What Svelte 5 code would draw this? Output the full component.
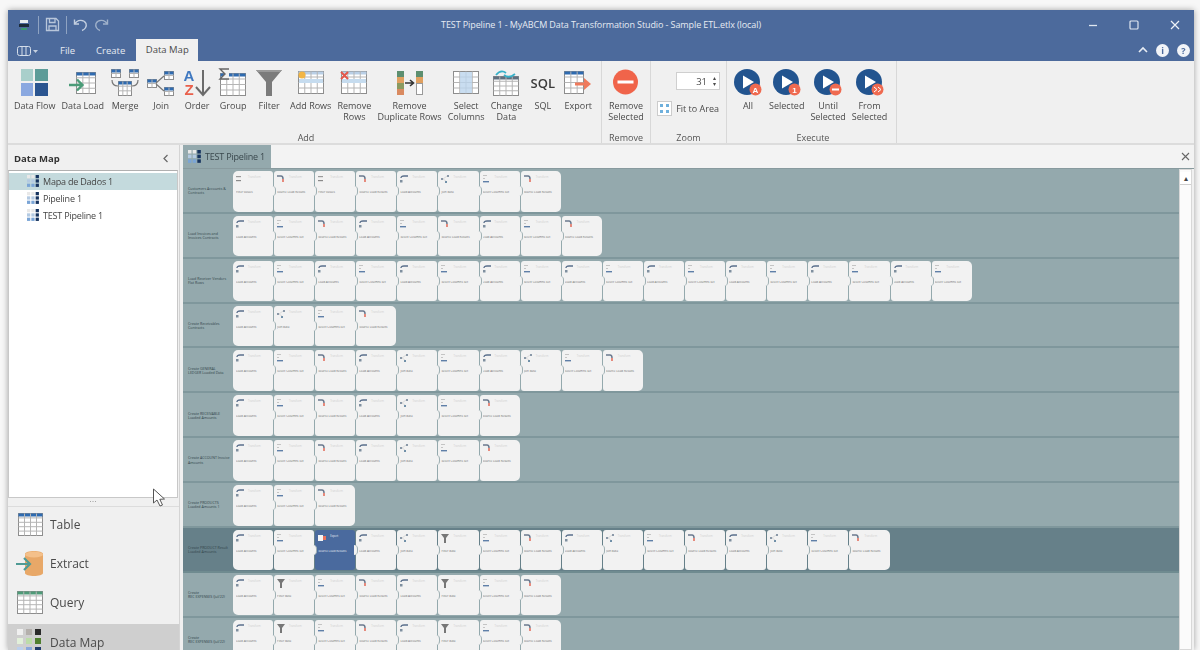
<script>
  const caption = {
    x: 'Filter values',
    p: 'Source Load Results',
    l: 'Load Accounts',
    m: 'Select Columns Set',
    j: 'Join data',
    f: 'Filter data',
    s: 'Source Load Results',
  }

  const rows = [
    { label: ['Customers Accounts &', 'Contracts'], cards: 'xpxpljmp' },
    { label: ['Load Invoices and', 'Invoices Contracts'], cards: 'lmplmplmp' },
    { label: ['Load Receiver Vendors', 'Flat Rows'], cards: 'lmlmlmlmlmlmlmlmlm' },
    { label: ['Create Receivables', 'Contracts'], cards: 'ljmp' },
    { label: ['Create GENERAL', 'LEDGER Loaded Data'], cards: 'lmpljmljmp' },
    { label: ['Create RECEIVABLE', 'Loaded Amounts'], cards: 'lmpljmp' },
    { label: ['Create ACCOUNT Invoice', 'Amounts'], cards: 'lmpljmp' },
    { label: ['Create PRODUCTS', 'Loaded Amounts 1'], cards: 'lmp' },
    { label: ['Create PRODUCT Result', 'Loaded Amounts'], cards: 'lmsljfmpljmpljmp', active: true },
    { label: ['Create', 'REC EXPENSES (Jul/22)'], cards: 'lfmplfmp' },
    { label: ['Create', 'REC EXPENSES (Jul/22)'], cards: 'lfmplfmp' },
  ]

  const treeItems = ['Mapa de Dados 1', 'Pipeline  1', 'TEST Pipeline 1']
  const nums = [0, 1, 2, 3]
</script>

{#snippet grid(x, y, w, h, cols, lines, head)}
  <rect x={x} y={y} width={w} height={h} fill="#fff" stroke="#8d8d8d" />
  {#if head}<rect x={x} y={y} width={w} height="3" fill={head} />{/if}
  {#each Array(cols - 1) as _, i}
    <line x1={x + (w * (i + 1)) / cols} x2={x + (w * (i + 1)) / cols} y1={y} y2={y + h} stroke="#b5b5b5" />
  {/each}
  {#each Array(lines - 1) as _, i}
    <line x1={x} x2={x + w} y1={y + (h * (i + 1)) / lines} y2={y + (h * (i + 1)) / lines} stroke="#b5b5b5" />
  {/each}
{/snippet}

{#snippet mapIcon(size)}
  <svg width={size} height={size} viewBox="0 0 12 12">
    {#each nums.slice(0, 3) as r}
      {#each nums.slice(0, 3) as c}
        <rect x={c * 4} y={r * 4} width="3" height="3"
          fill={c === 2 ? '#16335f' : r === 0 ? '#e8e8e8' : r === 1 ? '#b4cae2' : '#7ba5d6'} />
      {/each}
    {/each}
  </svg>
{/snippet}

{#snippet playIcon(badge)}
  <svg width="30" height="30" viewBox="0 0 30 30">
    <circle cx="14" cy="14" r="13" fill="#22548f" />
    <path d="M10 7.5 L21 14 L10 20.5 Z" fill="#fff" />
    <circle cx="22.5" cy="21.5" r="6" fill="#ef6a50" />
    {#if badge === 'A'}
      <text x="22.5" y="24.5" class="badge">A</text>
    {:else if badge === '1'}
      <text x="22.5" y="24.5" class="badge">1</text>
    {:else if badge === 'u'}
      <rect x="19" y="20.5" width="7" height="2" fill="#fff" />
    {:else}
      <path d="M19 19 l3 2.5 l-3 2.5 M23 19 l3 2.5 l-3 2.5" fill="none" stroke="#fff" />
    {/if}
  </svg>
{/snippet}

{#snippet cardIcon(kind)}
  <svg class="cicon" width="9" height="9" viewBox="0 0 9 9">
    {#if kind === 'l' || kind === 's'}
      <path d="M1 3 Q1 1 4 1 H8" fill="none" stroke="#5a6f8c" stroke-width="1.4" />
      <rect x="0" y="5" width="2.5" height="2.5" fill="#7f8f9f" />
    {:else if kind === 'p'}
      <path d="M0 1 H4 Q6 1 6 4" fill="none" stroke="#6b7a8f" stroke-width="1.5" />
      <path d="M6 4 V7" stroke="#e2705f" stroke-width="1.6" />
    {:else if kind === 'm'}
      <rect x="0" y="0" width="4" height="1" fill="#c4c4c4" />
      <rect x="0" y="3" width="2" height="1" fill="#c4c4c4" />
      <rect x="0" y="6" width="6" height="1.4" fill="#5f7fa8" />
    {:else if kind === 'x'}
      <rect x="0" y="1" width="5" height="1.2" fill="#9a9a9a" />
      <rect x="0" y="5" width="5" height="1.2" fill="#8a8a8a" />
    {:else if kind === 'j'}
      <rect x="0" y="3" width="2" height="2" fill="#8a98a8" />
      <rect x="6" y="0" width="2" height="2" fill="#8a98a8" />
      <rect x="4" y="6" width="2" height="2" fill="#6f8fa8" />
      <path d="M2 4 L6 1 M2 4 L5 6" stroke="#c0c0c0" stroke-width=".5" />
    {:else}
      <path d="M0 0 H8 L5 4 V9 H3 V4 Z" fill="#777" />
    {/if}
  </svg>
{/snippet}

<div class="window">
  <header class="titlebar">
    <div class="title-row">
      <div class="quick">
        <svg width="12" height="12" viewBox="0 0 12 12">
          <rect x="2" y="1" width="8" height="3" fill="#e8eef0" />
          <rect x="1" y="5" width="10" height="3" fill="#1c2c3a" />
          <rect x="3" y="9" width="6" height="2" fill="#3a9a70" />
        </svg>
        <i class="qsep first"></i>
        <svg width="15" height="15" viewBox="0 0 15 15" fill="none" stroke="#b8c6da" stroke-width="1.3">
          <path d="M1.5 1.5 H11 L13.5 4 V13.5 H1.5 Z" />
          <path d="M4.5 1.5 V5.5 H10 V1.5 M4 13.5 V9 H11 V13.5" />
        </svg>
        <i class="qsep"></i>
        <svg width="15" height="14" viewBox="0 0 15 14" fill="none" stroke="#c3cfe0" stroke-width="1.4">
          <path d="M1.5 1.5 V6 H6" />
          <path d="M1.8 6 C4 1.5 11 1 13 5.5 C14 8.5 12 11.5 9 12.5" />
        </svg>
        <svg class="redo" width="15" height="14" viewBox="0 0 15 14" fill="none" stroke="#9fb1ca" stroke-width="1.4">
          <path d="M13.5 1.5 V6 H9" />
          <path d="M13.2 6 C11 1.5 4 1 2 5.5 C1 8.5 3 11.5 6 12.5" />
        </svg>
      </div>
      <div class="title">TEST Pipeline 1 - MyABCM Data Transformation Studio - Sample ETL.etlx (local)</div>
      <div class="winbtns">
        <svg width="10" height="10" viewBox="0 0 10 10"><path d="M1 5.5 H9" stroke="#dfe6f0" stroke-width="1.3" /></svg>
        <svg width="10" height="10" viewBox="0 0 10 10"><rect x="1" y="1" width="8" height="8" rx="1" fill="none" stroke="#dfe6f0" stroke-width="1.2" /></svg>
        <svg width="10" height="10" viewBox="0 0 10 10"><path d="M1 1 L9 9 M9 1 L1 9" stroke="#eef2f7" stroke-width="1.2" /></svg>
      </div>
    </div>
    <div class="tab-row">
      <svg class="panel" width="22" height="12" viewBox="0 0 22 12" fill="none" stroke="#d5deea">
        <rect x=".5" y="1.5" width="13" height="9" rx="2" />
        <path d="M5 2 V10 M9 2 V10" />
        <path d="M16 5 L18.5 8 L21 5 Z" fill="#c5d0e0" stroke="none" />
      </svg>
      <span class="menu file">File</span>
      <span class="menu create">Create</span>
      <span class="menu current">Data Map</span>
      <div class="helpers">
        <svg width="10" height="8" viewBox="0 0 10 8"><path d="M1 6 L5 2 L9 6" fill="none" stroke="#e8edf4" stroke-width="1.6" /></svg>
        <span class="round">i</span>
        <span class="round">?</span>
      </div>
    </div>
  </header>

  <section class="ribbon">
    <div class="group add">
      <div class="buttons">
        <div class="rbtn">
          <svg width="30" height="30" viewBox="0 0 30 30">
            <rect x="1" y="1" width="12" height="12" fill="#a9cfcb" /><rect x="15" y="1" width="13" height="12" fill="#5d9c98" />
            <rect x="1" y="15" width="12" height="13" fill="#8aa8e0" /><rect x="15" y="15" width="13" height="13" fill="#2b5590" />
          </svg>
          <span>Data Flow</span>
        </div>
        <div class="rbtn">
          <svg width="30" height="30" viewBox="0 0 30 30">
            {@render grid(8.5, 4.5, 19, 21, 3, 4, '#2f6bb0')}
            <path d="M1 17 H14 M9 11.5 L14.5 17 L9 22.5" fill="none" stroke="#4a9c78" stroke-width="2.4" />
          </svg>
          <span>Data Load</span>
        </div>
        <div class="rbtn">
          <svg width="30" height="30" viewBox="0 0 30 30">
            {@render grid(1.5, 1.5, 9, 8, 2, 2, '#2f6bb0')}
            {@render grid(19.5, 1.5, 9, 8, 2, 2, '#2f6bb0')}
            {@render grid(8.5, 13.5, 13, 14, 3, 3, '#2f6bb0')}
            <path d="M2 12 Q2 18 8 18 M28 12 Q28 18 22 18" fill="none" stroke="#777" stroke-width="1.2" />
          </svg>
          <span>Merge</span>
        </div>
        <div class="rbtn">
          <svg width="30" height="30" viewBox="0 0 30 30">
            {@render grid(1.5, 11.5, 9, 8, 2, 2, '#2f6bb0')}
            {@render grid(18.5, 3.5, 9, 8, 2, 2, '#2f6bb0')}
            {@render grid(18.5, 19.5, 9, 8, 2, 2, '#2f6bb0')}
            <path d="M10 15 L18 8 M10 16 L18 23" stroke="#777" stroke-width="1.2" />
          </svg>
          <span>Join</span>
        </div>
        <div class="rbtn">
          <svg width="30" height="30" viewBox="0 0 30 30">
            <text x="7" y="13" class="az blue">A</text>
            <text x="7" y="27" class="az red">Z</text>
            <path d="M21 2 V26 M14 19 L21 27 L28 19" fill="none" stroke="#6b6b6b" stroke-width="2" />
          </svg>
          <span>Order</span>
        </div>
        <div class="rbtn">
          <svg width="30" height="30" viewBox="0 0 30 30">
            {@render grid(2.5, 5.5, 25, 22, 4, 4, '#2f6bb0')}
            <path d="M11 1 H2 L7 6 L2 11 H11" fill="#f0f0f0" stroke="#666" stroke-width="1.4" />
          </svg>
          <span>Group</span>
        </div>
        <div class="rbtn">
          <svg width="30" height="30" viewBox="0 0 30 30">
            <path d="M2 2 H28 L18 14 V28 H12 V14 Z" fill="#7b7b7b" />
            <path d="M2 2 H28 L26 4 H4 Z" fill="#999" />
          </svg>
          <span>Filter</span>
        </div>
        <div class="rbtn">
          <svg width="30" height="30" viewBox="0 0 30 30">
            {@render grid(2.5, 3.5, 25, 22, 4, 4, '#b9cfe6')}
            <rect x="3" y="11" width="24" height="4" fill="#c6dcef" />
            <circle cx="6" cy="7" r="3.5" fill="#f2b544" />
          </svg>
          <span>Add Rows</span>
        </div>
        <div class="rbtn">
          <svg width="30" height="30" viewBox="0 0 30 30">
            {@render grid(2.5, 3.5, 25, 22, 4, 4, '#b9cfe6')}
            <rect x="3" y="11" width="24" height="4" fill="#c6dcef" />
            <path d="M2 4 L9 11 M9 4 L2 11" stroke="#e4574a" stroke-width="2" />
          </svg>
          <span class="wrap">Remove Rows</span>
        </div>
        <div class="rbtn">
          <svg width="30" height="30" viewBox="0 0 30 30">
            <rect x="2" y="3" width="7" height="6" fill="#5d8f70" /><rect x="2" y="9" width="7" height="6" fill="#e0a060" />
            <rect x="2" y="15" width="7" height="6" fill="#8a9a60" /><rect x="2" y="21" width="7" height="6" fill="#d98a60" />
            <rect x="21" y="3" width="7" height="6" fill="#5d8f70" /><rect x="21" y="9" width="7" height="6" fill="#e0a060" />
            <rect x="21.5" y="15.5" width="6" height="11" fill="#fff" stroke="#999" />
            <path d="M10 15 H18 M15 12 L18.5 15 L15 18" fill="none" stroke="#333" stroke-width="1.6" />
          </svg>
          <span>Remove<br />Duplicate Rows</span>
        </div>
        <div class="rbtn">
          <svg width="30" height="30" viewBox="0 0 30 30">
            {@render grid(2.5, 3.5, 25, 22, 4, 4, '')}
            <rect x="9" y="4" width="12" height="21" fill="#bcd4ec" opacity=".8" />
          </svg>
          <span>Select<br />Columns</span>
        </div>
        <div class="rbtn tight">
          <svg width="30" height="30" viewBox="0 0 30 30">
            {@render grid(2.5, 8.5, 25, 19, 4, 4, '#5f6f7f')}
            <path d="M5 7 Q10 1 15 5 M24 6 Q18 11 13 7" fill="none" stroke="#37b0c8" stroke-width="1.8" />
          </svg>
          <span>Change<br />Data</span>
        </div>
        <div class="rbtn tight">
          <div class="sqlmark">SQL</div>
          <span>SQL</span>
        </div>
        <div class="rbtn tight">
          <svg width="30" height="30" viewBox="0 0 30 30">
            {@render grid(1.5, 3.5, 19, 22, 3, 4, '#2f6bb0')}
            <path d="M12 16 H24" stroke="#ef7a5c" stroke-width="3" />
            <path d="M21 10 L28 16 L21 22 Z" fill="#ef7a5c" />
          </svg>
          <span>Export</span>
        </div>
      </div>
      <div class="glabel">Add</div>
    </div>

    <div class="group remove">
      <div class="buttons">
        <div class="rbtn">
          <svg width="30" height="30" viewBox="0 0 30 30">
            <circle cx="14.5" cy="14" r="12.5" fill="#f0644a" />
            <rect x="6.5" y="12.5" width="16" height="3" fill="#fff" />
          </svg>
          <span>Remove<br />Selected</span>
        </div>
      </div>
      <div class="glabel">Remove</div>
    </div>

    <div class="group zoom">
      <div class="zoom-body">
        <div class="spin">
          <span>31</span>
          <div class="arrows"><b>▴</b><b>▾</b></div>
        </div>
        <div class="fit">
          <svg width="15" height="15" viewBox="0 0 15 15">
            <rect x=".5" y=".5" width="14" height="14" fill="#fff" stroke="#ccc" />
            <rect x="3" y="3" width="3" height="3" fill="#6fb0dc" /><rect x="9" y="3" width="3" height="3" fill="#6fb0dc" />
            <rect x="3" y="9" width="3" height="3" fill="#6fb0dc" /><rect x="9" y="9" width="3" height="3" fill="#6fb0dc" />
          </svg>
          <span>Fit to Area</span>
        </div>
      </div>
      <div class="glabel">Zoom</div>
    </div>

    <div class="group execute">
      <div class="buttons">
        <div class="rbtn">{@render playIcon('A')}<span>All</span></div>
        <div class="rbtn">{@render playIcon('1')}<span>Selected</span></div>
        <div class="rbtn">{@render playIcon('u')}<span>Until<br />Selected</span></div>
        <div class="rbtn">{@render playIcon('f')}<span>From<br />Selected</span></div>
      </div>
      <div class="glabel">Execute</div>
    </div>
  </section>

  <div class="main">
    <aside class="side">
      <div class="side-head">
        <strong>Data Map</strong>
        <svg width="7" height="9" viewBox="0 0 7 9"><path d="M5.5 1 L2 4.5 L5.5 8" fill="none" stroke="#666" stroke-width="1.2" /></svg>
      </div>
      <div class="tree">
        {#each treeItems as item, i}
          <div class="tree-item" class:sel={i === 0}>
            {@render mapIcon(13)}
            <span>{item}</span>
          </div>
        {/each}
      </div>
      <div class="split">•••</div>
      <nav class="nav">
        <div class="nav-item">
          <svg width="28" height="26" viewBox="0 0 28 26">
            {@render grid(2.5, 1.5, 24, 22, 4, 5, '#2f6bb0')}
          </svg>
          <span>Table</span>
        </div>
        <div class="nav-item">
          <svg width="28" height="28" viewBox="0 0 28 28">
            <path d="M9 4 C9 0 27 0 27 4 V23 C27 27 9 27 9 23 Z" fill="#e8a868" />
            <ellipse cx="18" cy="4.5" rx="9" ry="3" fill="#f4c08a" />
            <path d="M0 14 H13 M8 8 L14 14 L8 20" fill="none" stroke="#4f9a94" stroke-width="2.2" />
          </svg>
          <span>Extract</span>
        </div>
        <div class="nav-item">
          <svg width="28" height="26" viewBox="0 0 28 26">
            {@render grid(1.5, 1.5, 25, 22, 4, 5, '#4f9a78')}
          </svg>
          <span>Query</span>
        </div>
        <div class="nav-item on">
          <svg width="28" height="26" viewBox="0 0 28 26">
            <rect x="1" y="0" width="6" height="6" fill="#f0f0f0" /><rect x="10" y="0" width="6" height="6" fill="#b4b0ac" /><rect x="19" y="0" width="6" height="6" fill="#2a2a2a" />
            <rect x="1" y="9" width="6" height="6" fill="#e2f0da" /><rect x="10" y="9" width="6" height="6" fill="#bcdca8" /><rect x="19" y="9" width="6" height="6" fill="#4f7f2f" />
            <rect x="1" y="18" width="6" height="6" fill="#bcd0ec" /><rect x="10" y="18" width="6" height="6" fill="#8aa8dc" /><rect x="19" y="18" width="6" height="6" fill="#1f3a6a" />
          </svg>
          <span>Data Map</span>
        </div>
      </nav>
    </aside>

    <div class="content">
      <div class="doc-tabs">
        <div class="doc-tab">
          {@render mapIcon(14)}
          <span>TEST Pipeline 1</span>
        </div>
        <svg width="9" height="9" viewBox="0 0 9 9"><path d="M1 1 L8 8 M8 1 L1 8" stroke="#666" stroke-width="1.1" /></svg>
      </div>
      <div class="canvas">
        <div class="lanes">
          {#each rows as row}
            <div class="lane" class:active={row.active}>
              <div class="lane-label">{row.label[0]}<br />{row.label[1]}</div>
              <div class="cards">
                {#each row.cards.split('') as kind}
                  <div class="card" class:picked={kind === 's'}>
                    <div class="chead">
                      {#if kind === 's'}
                        <svg class="cicon" width="9" height="9" viewBox="0 0 9 9">
                          <rect x="0" y="1" width="5" height="6" fill="#f4f4f4" /><rect x="5" y="2" width="3" height="4" fill="#e8705c" />
                        </svg>
                      {:else}
                        {@render cardIcon(kind)}
                      {/if}
                      <small>{kind === 's' ? 'Export' : 'Transform'}</small>
                    </div>
                    <p>{caption[kind]}</p>
                  </div>
                {/each}
              </div>
            </div>
          {/each}
        </div>
        <div class="scroll">
          <div class="scroll-up">▴</div>
        </div>
      </div>
    </div>
  </div>

  <svg class="cursor" width="14" height="19" viewBox="0 0 14 19">
    <path d="M1.5 1 V15 L5 12 L8 18 L10.5 17 L7.8 11.3 L12.5 11 Z" fill="#fff" stroke="#555" />
  </svg>
</div>

<style>
  :global(body) {
    margin: 0;
    background: #f7f7f7;
    overflow: hidden;
  }
  .window {
    position: relative;
    margin: 10px 6px 0 8px;
    height: 640px;
    overflow: hidden;
    background: #f0f0f0;
    box-shadow: 0 0 6px rgba(0, 0, 0, 0.35);
    font-family: "Open Sans", "Liberation Sans", sans-serif;
    color: #4a4a4a;
    filter: blur(0.6px);
  }
  .titlebar {
    height: 51px;
    background: #4c6a9c;
    color: #e6ebf3;
    font-size: 9.5px;
  }
  .title-row {
    display: grid;
    grid-template-columns: 1fr auto 1fr;
    align-items: center;
    height: 29px;
  }
  .quick {
    display: flex;
    align-items: center;
    padding-left: 10px;
  }
  .qsep {
    width: 1px;
    height: 18px;
    margin: 0 6px;
    background: #8fa3c2;
  }
  .qsep.first {
    margin-left: 8px;
  }
  .redo {
    margin-left: 6px;
  }
  .title {
    font-size: 9px;
    letter-spacing: -0.1px;
  }
  .winbtns {
    display: flex;
    justify-content: flex-end;
    gap: 31px;
    padding-right: 14px;
  }
  .tab-row {
    display: flex;
    align-items: flex-end;
    height: 22px;
    padding-left: 9px;
  }
  .panel {
    margin-bottom: 4px;
  }
  .menu {
    line-height: 20px;
  }
  .file {
    margin-left: 21px;
  }
  .create {
    margin-left: 21px;
  }
  .current {
    margin-left: 11px;
    width: 62px;
    height: 22px;
    line-height: 22px;
    text-align: center;
    background: #f0f0f0;
    color: #4a4a4a;
  }
  .helpers {
    margin-left: auto;
    display: flex;
    align-items: center;
    gap: 7px;
    height: 22px;
    padding-right: 4px;
    margin-top: -2px;
  }
  .round {
    width: 13px;
    height: 13px;
    margin-left: 1px;
    border-radius: 50%;
    background: #f2f4f8;
    color: #4c6a9c;
    font-size: 9px;
    font-weight: 700;
    line-height: 13px;
    text-align: center;
  }
  .ribbon {
    display: flex;
    height: 84px;
    border-bottom: 2px solid #dcdcdc;
    box-sizing: border-box;
  }
  .group {
    display: flex;
    flex-direction: column;
    border-right: 1px solid #d8d8d8;
    box-sizing: border-box;
  }
  .add {
    width: 594px;
    padding-left: 3px;
  }
  .remove {
    width: 49px;
  }
  .zoom {
    width: 76px;
  }
  .execute {
    width: 170px;
    padding-left: 3px;
  }
  .buttons {
    display: flex;
    flex: 1;
  }
  .remove .buttons {
    justify-content: center;
  }
  .rbtn {
    display: flex;
    flex-direction: column;
    align-items: center;
    box-sizing: border-box;
    min-width: 36px;
    padding: 7px 3px 0;
    font-size: 9px;
    line-height: 11px;
    text-align: center;
    white-space: nowrap;
  }
  .rbtn.tight {
    min-width: 35px;
  }
  .rbtn span {
    margin-top: 2px;
  }
  .rbtn .wrap {
    width: 34px;
    white-space: normal;
  }
  .sqlmark {
    height: 30px;
    line-height: 30px;
    font-size: 13px;
    font-weight: 600;
    color: #3b3b3b;
  }
  .az {
    font-family: "Liberation Sans", sans-serif;
    font-size: 15px;
    font-weight: 700;
    text-anchor: middle;
  }
  .blue {
    fill: #3f78c0;
  }
  .red {
    fill: #e9604c;
  }
  .badge {
    font-family: "Liberation Sans", sans-serif;
    font-size: 8px;
    font-weight: 700;
    fill: #fff;
    text-anchor: middle;
  }
  .glabel {
    height: 12px;
    line-height: 13px;
    font-size: 9px;
    text-align: center;
    color: #555;
  }
  .zoom-body {
    flex: 1;
    display: flex;
    flex-direction: column;
    align-items: flex-end;
    padding: 11px 6px 0 0;
    font-size: 9px;
  }
  .spin {
    display: flex;
    justify-content: flex-end;
    align-items: center;
    gap: 6px;
    width: 44px;
    height: 18px;
    box-sizing: border-box;
    padding-right: 3px;
    background: #fff;
    border: 1px solid #cfcfcf;
    font-size: 9.5px;
  }
  .arrows {
    display: flex;
    flex-direction: column;
    font-size: 6px;
    line-height: 6px;
  }
  .arrows b {
    font-weight: 400;
  }
  .fit {
    display: flex;
    align-items: center;
    gap: 4px;
    margin-top: 11px;
    margin-right: 1px;
    white-space: nowrap;
  }
  .main {
    display: flex;
    height: 505px;
  }
  .side {
    width: 172px;
    display: flex;
    flex-direction: column;
    flex: none;
    border-right: 1px solid #d4d4d4;
    box-sizing: border-box;
  }
  .side-head {
    display: flex;
    align-items: center;
    justify-content: space-between;
    height: 25px;
    flex: none;
    padding: 2px 10px 0 6px;
    box-sizing: border-box;
    font-size: 9.5px;
  }
  .side-head strong {
    color: #333;
    font-weight: 700;
  }
  .tree {
    height: 328px;
    flex: none;
    margin-right: 1px;
    padding-top: 2px;
    box-sizing: border-box;
    background: #fff;
    border: 1px solid #c8c8c8;
    border-top-color: #b0b0b0;
  }
  .tree-item {
    display: flex;
    align-items: center;
    gap: 3px;
    height: 17px;
    padding-left: 18px;
    font-size: 9px;
    color: #444;
    letter-spacing: -0.2px;
  }
  .tree-item.sel {
    background: #c4dadd;
  }
  .split {
    height: 8px;
    line-height: 7px;
    font-size: 4px;
    letter-spacing: 1px;
    text-align: center;
    color: #888;
    border-bottom: 1px solid #dcdcdc;
    flex: none;
  }
  .nav {
    flex: 1;
    display: flex;
    flex-direction: column;
  }
  .nav-item {
    display: flex;
    align-items: center;
    gap: 6px;
    height: 39px;
    flex: none;
    box-sizing: border-box;
    padding: 0 0 4px 8px;
    font-size: 12px;
    color: #4a4a4a;
  }
  .nav-item svg {
    flex: none;
  }
  .nav-item.on {
    background: #cfcfcf;
    height: 45px;
    padding-bottom: 9px;
  }
  .content {
    flex: 1;
    min-width: 0;
    margin-left: 3px;
    display: flex;
    flex-direction: column;
  }
  .doc-tabs {
    display: flex;
    align-items: center;
    justify-content: space-between;
    height: 23px;
    flex: none;
    padding-right: 4px;
    background: #f3f3f3;
  }
  .doc-tab {
    display: flex;
    align-items: center;
    gap: 3px;
    align-self: stretch;
    width: 88px;
    padding-left: 5px;
    box-sizing: border-box;
    background: #94a9ad;
    color: #39474c;
    font-size: 9px;
    letter-spacing: -0.2px;
    white-space: nowrap;
  }
  .canvas {
    flex: 1;
    min-height: 0;
    display: flex;
    padding-right: 2px;
    border-top: 1px solid #889a9e;
  }
  .lanes {
    flex: 1;
    min-width: 0;
    background: #94a9ad;
  }
  .lane {
    display: flex;
    height: 44.87px;
    box-sizing: border-box;
    padding-top: 2px;
    border-bottom: 2px solid #7f979c;
  }
  .lane.active {
    background: #668089;
    border-bottom-color: #6f8b90;
  }
  .lane-label {
    width: 50px;
    flex: none;
    align-self: center;
    padding-left: 5px;
    box-sizing: border-box;
    font-size: 3.6px;
    line-height: 4.2px;
    color: #33454c;
  }
  .cards {
    display: flex;
    gap: 1px;
  }
  .card {
    position: relative;
    width: 40.1px;
    height: 40.6px;
    box-sizing: border-box;
    padding: 4px 3px;
    background: #f2f2f2;
    border-radius: 3px;
  }
  .card:first-child {
    border-radius: 5px 3px 3px 5px;
  }
  .card:last-child {
    border-radius: 3px 5px 5px 3px;
  }
  .card:not(:last-child)::after {
    content: "";
    position: absolute;
    top: 15px;
    right: -3px;
    width: 4px;
    height: 10px;
    box-sizing: border-box;
    background: #f2f2f2;
    border-right: 1px solid #9fb0b3;
    border-radius: 0 5px 5px 0;
    z-index: 1;
  }
  .card.picked {
    background: #4a6a9e;
    color: #e8edf5;
  }
  .card.picked p,
  .card.picked small {
    color: #e8edf5;
  }
  .chead {
    display: flex;
    gap: 3px;
    align-items: flex-start;
    height: 10px;
  }
  .cicon {
    flex: none;
  }
  .chead small {
    font-size: 2.6px;
    line-height: 5px;
    color: #cfcfcf;
  }
  .card p {
    margin: 6px 0 0;
    font-size: 3px;
    line-height: 3.6px;
    color: #6f6f6f;
    white-space: nowrap;
    overflow: hidden;
  }
  .scroll {
    width: 13px;
    flex: none;
    background: #fbfbfb;
    border: 1px solid #d8d8d8;
    box-sizing: border-box;
  }
  .scroll-up {
    height: 12px;
    margin-top: 2px;
    font-size: 8px;
    line-height: 11px;
    text-align: center;
    color: #444;
    background: #fff;
    border-bottom: 1px solid #cfcfcf;
  }
  .cursor {
    position: absolute;
    left: 144px;
    top: 478px;
  }
</style>
